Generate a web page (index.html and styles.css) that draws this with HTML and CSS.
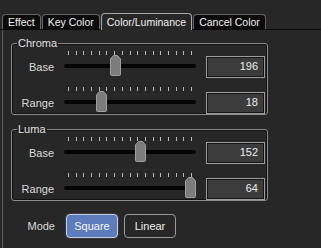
FILE: index.html
```html
<!DOCTYPE html>
<html lang="en">
<head>
    <meta charset="UTF-8">
    <title>Color/Luminance</title>
    <link rel="stylesheet" href="styles.css">
</head>
<body>
    <div class="tabs">
        <div class="tab">Effect</div>
        <div class="tab">Key Color</div>
        <div class="tab active">Color/Luminance</div>
        <div class="tab">Cancel Color</div>
    </div>

    <div class="panel">
        <fieldset class="group">
            <legend>Chroma</legend>
            <div class="row">
                <span class="label">Base</span>
                <div class="slider">
                    <div class="ticks"><i></i><i></i><i></i><i></i><i></i><i></i><i></i><i></i><i></i><i></i><i></i><i></i><i></i><i></i><i></i><i></i><i></i></div>
                    <div class="track"></div>
                    <svg class="thumb" style="left:46px" width="11" height="21" viewBox="0 0 11 21"><path d="M3.5 0.5 H7.5 L10.5 4 V19.5 Q10.5 20.5 9.5 20.5 H1.5 Q0.5 20.5 0.5 19.5 V4 Z"/></svg>
                </div>
                <div class="value">196</div>
            </div>
            <div class="row">
                <span class="label">Range</span>
                <div class="slider">
                    <div class="ticks"><i></i><i></i><i></i><i></i><i></i><i></i><i></i><i></i><i></i><i></i><i></i><i></i><i></i><i></i><i></i><i></i><i></i></div>
                    <div class="track"></div>
                    <svg class="thumb" style="left:32px" width="11" height="21" viewBox="0 0 11 21"><path d="M3.5 0.5 H7.5 L10.5 4 V19.5 Q10.5 20.5 9.5 20.5 H1.5 Q0.5 20.5 0.5 19.5 V4 Z"/></svg>
                </div>
                <div class="value">18</div>
            </div>
        </fieldset>

        <fieldset class="group luma">
            <legend>Luma</legend>
            <div class="row">
                <span class="label">Base</span>
                <div class="slider">
                    <div class="ticks"><i></i><i></i><i></i><i></i><i></i><i></i><i></i><i></i><i></i><i></i><i></i><i></i><i></i><i></i><i></i><i></i><i></i></div>
                    <div class="track"></div>
                    <svg class="thumb" style="left:71px" width="11" height="21" viewBox="0 0 11 21"><path d="M3.5 0.5 H7.5 L10.5 4 V19.5 Q10.5 20.5 9.5 20.5 H1.5 Q0.5 20.5 0.5 19.5 V4 Z"/></svg>
                </div>
                <div class="value">152</div>
            </div>
            <div class="row">
                <span class="label">Range</span>
                <div class="slider">
                    <div class="ticks"><i></i><i></i><i></i><i></i><i></i><i></i><i></i><i></i><i></i><i></i><i></i><i></i><i></i><i></i><i></i><i></i><i></i></div>
                    <div class="track"></div>
                    <svg class="thumb" style="left:121px" width="11" height="21" viewBox="0 0 11 21"><path d="M3.5 0.5 H7.5 L10.5 4 V19.5 Q10.5 20.5 9.5 20.5 H1.5 Q0.5 20.5 0.5 19.5 V4 Z"/></svg>
                </div>
                <div class="value">64</div>
            </div>
        </fieldset>

        <div class="mode">
            <span class="label">Mode</span>
            <button class="btn on">Square</button>
            <button class="btn">Linear</button>
        </div>
    </div>
</body>
</html>
```

FILE: styles.css
```css
body {
    margin: 0;
    background-color: #272727;
    font-family: "Liberation Sans", Arial, sans-serif;
    font-size: 11px;
    color: #e2e2e2;
}
.tabs {
    display: flex;
    align-items: flex-end;
    padding: 13px 0 0 2px;
    border-bottom: 1px solid #0a0a0a;
}
.tab {
    box-sizing: border-box;
    height: 15px;
    line-height: 14px;
    padding: 0 5px;
    margin-right: 1px;
    font-size: 10.5px;
    background-color: #0b0b0b;
    border: 1px solid #666;
    border-bottom: none;
    border-radius: 4px 4px 0 0;
    color: #f0f0f0;
}
.tab.active {
    height: 17px;
    line-height: 16px;
    margin-bottom: -1px;
    background-color: #272727;
    border-color: #a8a8a8;
    position: relative;
}
.panel {
    margin-left: 2px;
    min-height: 211px;
    padding: 7px 0 0 8px;
    border-left: 1px solid #5a5a5a;
}
.group {
    box-sizing: border-box;
    width: 257px;
    margin: 0;
    padding: 1px 0 0 0;
    border: 1px solid #8a8a8a;
    border-radius: 3px;
    box-shadow: inset 0 0 0 1px #111;
}
.group legend {
    margin-left: 5px;
    padding: 0 1px;
    line-height: 13px;
}
.luma {
    margin-top: 8px;
}
.row {
    display: grid;
    grid-template-columns: 42px 132px 59px;
    column-gap: 10px;
    align-items: end;
}
.row + .row {
    margin-top: 9px;
}
.label {
    text-align: right;
    line-height: 22px;
    color: #dcdcdc;
}
.slider {
    position: relative;
    height: 27px;
}
.ticks {
    display: flex;
    justify-content: space-between;
    height: 4px;
    padding: 0 4px 0 4px;
}
.ticks i {
    width: 1px;
    background-color: #b8b8b8;
}
.track {
    height: 4px;
    margin-top: 9px;
    border-radius: 2px;
    background-color: #050505;
}
.thumb {
    position: absolute;
    top: 4px;
}
.thumb path {
    fill: #7c7c7c;
    stroke: #a0a0a0;
    stroke-width: 1;
}
.value {
    box-sizing: border-box;
    height: 22px;
    line-height: 18px;
    padding-right: 6px;
    text-align: right;
    background-color: #3c3c3c;
    border: 1px solid #9c9c9c;
    box-shadow: inset 0 0 0 1px #151515;
    color: #ececec;
}
.mode {
    display: flex;
    align-items: center;
    margin-top: 13px;
}
.mode .label {
    width: 44px;
    margin-right: 11px;
}
.btn {
    box-sizing: border-box;
    width: 52px;
    height: 24px;
    margin-right: 6px;
    padding: 0;
    font-family: "Liberation Sans", Arial, sans-serif;
    font-size: 11px;
    color: #eeeeee;
    background-color: #272727;
    border: 1px solid #9a9a9a;
    border-radius: 4px;
}
.btn.on {
    background-color: #5d7cbb;
    border-color: #c4cde0;
    box-shadow: 0 0 0 1px #3a3a3a;
    color: #f4f6fb;
}
```
